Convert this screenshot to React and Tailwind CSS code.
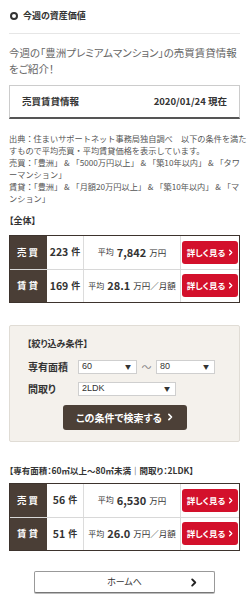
import React from 'react';

function Chevron({ className = '' }) {
    return (
        <svg viewBox="0 0 8 10" className={className} fill="none" stroke="currentColor" strokeWidth="2.2" strokeLinecap="round" strokeLinejoin="round">
            <path d="M2.5 1.5 L6 5 L2.5 8.5" />
        </svg>
    );
}

function FakeSelect({ value, width }) {
    return (
        <div className={`${width} h-[14px] bg-white border border-[#cfcfcf] flex items-center justify-between pl-[3px] pr-[5px]`}>
            <span className="text-[9px] leading-none text-[#333] font-['Liberation_Sans',Arial,sans-serif]">{value}</span>
            <span className="text-[6px] leading-none text-[#333]">▼</span>
        </div>
    );
}

function DetailButton() {
    return (
        <div className="w-[56px] h-[23px] bg-[#d3102b] rounded-[3px] flex items-center justify-center gap-[3px] text-white">
            <span className="text-[8.5px] font-bold leading-none">詳しく見る</span>
            <Chevron className="w-[5px] h-[7px]" />
        </div>
    );
}

function ResultTable({ rows }) {
    return (
        <div className="border border-[#3d332d] bg-white">
            {rows.map((r, i) => (
                <div key={i} className={`grid grid-cols-[37px_37px_97px_1fr] h-[33px] ${i > 0 ? 'border-t border-[#d8d8d8]' : ''}`}>
                    <div className="bg-[#4a3e36] text-white font-bold text-[9.5px] flex items-center justify-center tracking-[2px]">
                        {r.label}
                    </div>
                    <div className="flex items-center justify-center text-[#333] border-r border-[#dcdcdc]">
                        <span className="text-[10.5px] font-bold">{r.count}</span>
                        <span className="text-[9px] font-bold ml-[3px]">件</span>
                    </div>
                    <div className="flex items-center justify-center text-[#333] border-r border-[#dcdcdc] whitespace-nowrap">
                        <span className="text-[8px]">平均</span>
                        <span className="text-[11px] font-bold mx-[3px]">{r.avg}</span>
                        <span className="text-[8.5px]">{r.unit}</span>
                    </div>
                    <div className="flex items-center justify-center">
                        <DetailButton />
                    </div>
                </div>
            ))}
        </div>
    );
}

const sourceLines = [
    '出典：住まいサポートネット事務局独自調べ　以下の条件を満た',
    'すもので平均売買・平均賃貸価格を表示しています。',
    '売買：「豊洲」 & 「5000万円以上」 & 「築10年以内」 & 「タワ',
    'ーマンション」',
    '賃貸：「豊洲」 & 「月額20万円以上」 & 「築10年以内」 & 「マ',
    'ンション」',
];

export default function App() {
    return (
        <div className="w-[249px] min-h-[605px] bg-white px-[9px] pt-[9px] pb-[10px] font-['Noto_Sans_CJK_JP','Noto_Sans',sans-serif] [font-feature-settings:'palt']">
            {/* 見出し */}
            <div className="flex items-center gap-[5px] pb-[10px] border-b border-[#e6e6e6]">
                <span className="w-[8px] h-[8px] rounded-full border-[2px] border-[#333] ml-[1px]"></span>
                <span className="text-[9px] font-bold text-[#333]">今週の資産価値</span>
            </div>

            <p className="mt-[11px] text-[10.5px] leading-[16px] text-[#666]">
                今週の「豊洲プレミアムマンション」の売買賃貸情報をご紹介！
            </p>

            <div className="mt-[8px] h-[34px] border border-[#cccccc] border-b-[2px] border-b-[#555] flex items-center justify-between px-[12px] text-[9.5px] font-bold text-[#333]">
                <span>売買賃貸情報</span>
                <span>2020/01/24 現在</span>
            </div>

            <div className="mt-[13px] text-[8.2px] leading-[12px] text-[#555] [font-feature-settings:normal]">
                {sourceLines.map((l, i) => (
                    <div key={i} className="whitespace-nowrap">{l}</div>
                ))}
            </div>

            <p className="mt-[11px] text-[9px] font-bold text-[#333] leading-[12px]">【全体】</p>

            <div className="mt-[8px]">
                <ResultTable rows={[
                    { label: '売買', count: '223', avg: '7,842', unit: '万円' },
                    { label: '賃貸', count: '169', avg: '28.1', unit: '万円／月額' },
                ]} />
            </div>

            {/* 絞り込み */}
            <div className="mt-[22px] bg-[#f4f1ec] border border-[#e0dcd5] rounded-[2px] pl-[17px] pr-[10px] pt-[12px] pb-[11px]">
                <p className="text-[9px] font-bold text-[#333] leading-[12px]">【絞り込み条件】</p>
                <div className="mt-[10px] flex items-center">
                    <span className="w-[51px] pl-[1px] text-[10px] leading-[14px] font-bold text-[#333]">専有面積</span>
                    <FakeSelect value="60" width="w-[59px]" />
                    <span className="w-[19px] text-center text-[10px] leading-[14px] text-[#888]">〜</span>
                    <FakeSelect value="80" width="w-[59px]" />
                </div>
                <div className="mt-[8px] flex items-center">
                    <span className="w-[51px] pl-[1px] text-[10px] leading-[14px] font-bold text-[#333]">間取り</span>
                    <FakeSelect value="2LDK" width="w-[98px]" />
                </div>
                <div className="mt-[9px] flex justify-center pr-[7px]">
                    <div className="w-[124px] h-[25px] bg-[#4c4037] rounded-[3px] flex items-center justify-center gap-[5px] text-white">
                        <span className="text-[10px] font-bold">この条件で検索する</span>
                        <Chevron className="w-[6px] h-[8px]" />
                    </div>
                </div>
            </div>

            <p className="mt-[22px] text-[8.5px] font-bold text-[#333] leading-[12px] whitespace-nowrap">【専有面積：60㎡以上～80㎡未満｜間取り：2LDK】</p>

            <div className="mt-[7px]">
                <ResultTable rows={[
                    { label: '売買', count: '56', avg: '6,530', unit: '万円' },
                    { label: '賃貸', count: '51', avg: '26.0', unit: '万円／月額' },
                ]} />
            </div>

            <div className="mt-[20px] flex justify-center">
                <div className="relative w-[181px] h-[22px] border border-[#999] border-b-[#777] rounded-[2px] shadow-[0_1px_0_#bbb] flex items-center justify-center bg-white">
                    <span className="text-[9px] text-[#333]">ホームへ</span>
                    <Chevron className="absolute right-[17px] top-[6px] w-[7px] h-[9px] text-[#222]" />
                </div>
            </div>
        </div>
    );
}
